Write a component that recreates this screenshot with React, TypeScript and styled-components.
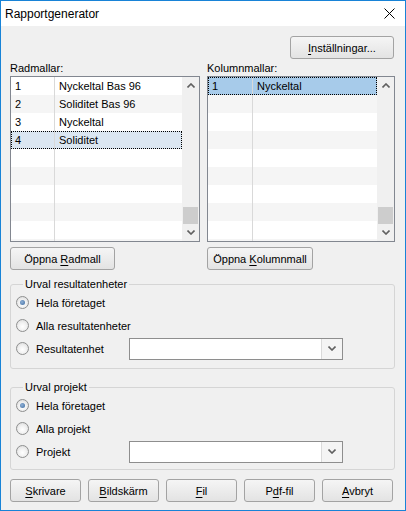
import React from "react";
import styled, { createGlobalStyle, css } from "styled-components";

const GlobalStyle = createGlobalStyle`
  html, body {
    margin: 0;
    padding: 0;
    background: #ffffff;
  }
  body {
    font-family: "Liberation Sans", Arial, sans-serif;
    font-size: 11px;
    color: #000;
  }
`;

const Window = styled.div`
  width: 406px;
  height: 511px;
  box-sizing: border-box;
  border: 1px solid #1883d7;
  background: #f0f0f0;
  display: flex;
  flex-direction: column;
`;

const TitleBar = styled.div`
  height: 25px;
  flex: none;
  background: #ffffff;
  display: flex;
  align-items: center;
  justify-content: space-between;
  padding: 0 10px 0 4px;
`;

const Title = styled.span`
  font-size: 12px;
  color: #000;
`;

const Body = styled.div`
  flex: 1;
  padding: 10px 10px 0 9px;
  display: flex;
  flex-direction: column;
`;

const TopRow = styled.div`
  display: flex;
  justify-content: flex-end;
  padding-right: 1px;
`;

const Button = styled.button<{ $width?: number }>`
  height: 23px;
  width: ${({ $width }) => ($width ? `${$width}px` : "auto")};
  box-sizing: border-box;
  border: 1px solid #a3a3a3;
  border-radius: 3px;
  background: linear-gradient(#f5f5f5, #e3e3e3);
  font-family: "Liberation Sans", Arial, sans-serif;
  font-size: 11px;
  color: #000;
  padding: 0;
  cursor: default;

  u {
    text-decoration: underline;
    text-underline-offset: 2px;
  }
`;

const Columns = styled.div`
  display: grid;
  grid-template-columns: 190px 188px;
  column-gap: 7px;
`;

const Column = styled.div`
  display: flex;
  flex-direction: column;
  align-items: flex-start;
`;

const FieldLabel = styled.div`
  line-height: 13px;
  padding-top: 3px;
  margin-bottom: 1px;
`;

const ListBox = styled.div`
  width: 100%;
  height: 166px;
  box-sizing: border-box;
  border: 1px solid #828790;
  background: #ffffff;
  display: flex;
  margin-bottom: 5px;
`;

const Rows = styled.div`
  flex: 1;
  overflow: hidden;
`;

const Row = styled.div<{ $col: number; $alt: boolean; $sel?: "focus" | "soft" }>`
  display: grid;
  grid-template-columns: ${({ $col }) => $col}px 1fr;
  height: 18px;
  line-height: 18px;
  background: ${({ $alt }) => ($alt ? "#f5f5f5" : "#ffffff")};
  ${({ $sel }) =>
    $sel &&
    css`
      background: ${$sel === "focus" ? "#a7cbea" : "#dbe6f1"};
      outline: 1px dotted #000;
      outline-offset: -1px;
    `}
`;

const Cell = styled.div<{ $divider?: boolean }>`
  padding-left: ${({ $divider }) => ($divider ? "4px" : "4px")};
  border-left: ${({ $divider }) => ($divider ? "1px solid #d9d9d9" : "none")};
  white-space: nowrap;
  overflow: hidden;
`;

const ScrollBar = styled.div`
  width: 17px;
  flex: none;
  background: #f0f0f0;
  display: flex;
  flex-direction: column;
`;

const ScrollArrow = styled.div`
  height: 17px;
  display: flex;
  align-items: center;
  justify-content: center;
`;

const Track = styled.div`
  flex: 1;
  display: flex;
  flex-direction: column;
  justify-content: flex-end;
  padding: 0 1px;
`;

const Thumb = styled.div`
  height: 17px;
  background: #cdcdcd;
`;

const Group = styled.fieldset<{ $top: number; $bottom: number }>`
  margin: ${({ $top }) => $top}px 0 0 0;
  padding: 0 0 ${({ $bottom }) => $bottom}px 5px;
  border: 1px solid #d5d5d5;
  border-radius: 3px;
  min-width: 0;
`;

const Legend = styled.legend`
  margin-left: 7px;
  padding: 0 2px;
  line-height: 13px;
`;

const RadioRow = styled.div`
  height: 23px;
  display: flex;
  align-items: center;
`;

const Radio = styled.span<{ $checked?: boolean }>`
  width: 13px;
  height: 13px;
  box-sizing: border-box;
  border-radius: 50%;
  border: 1px solid #8e8f8f;
  background: radial-gradient(circle at 50% 60%, #ffffff 0%, #f1f1f1 45%, #d6d6d6 100%);
  flex: none;
  margin-right: 7px;
  display: flex;
  align-items: center;
  justify-content: center;

  &::after {
    content: "";
    display: ${({ $checked }) => ($checked ? "block" : "none")};
    width: 5px;
    height: 5px;
    border-radius: 50%;
    background: radial-gradient(circle at 40% 40%, #8fb0d6, #3d6b9f);
  }
`;

const RadioLabel = styled.span<{ $width?: number }>`
  width: ${({ $width }) => ($width ? `${$width}px` : "auto")};
  flex: none;
`;

const Combo = styled.div`
  width: 214px;
  height: 22px;
  box-sizing: border-box;
  border: 1px solid #8e8e8e;
  background: #ffffff;
  display: flex;
  justify-content: flex-end;
`;

const ComboButton = styled.div`
  width: 20px;
  border-left: 1px solid #dadada;
  background: #f4f4f4;
  display: flex;
  align-items: center;
  justify-content: center;
`;

const Footer = styled.div`
  margin-top: 9px;
  display: grid;
  grid-template-columns: repeat(5, 71px);
  column-gap: 7px;
`;

const CloseIcon = () => (
  <svg width="11" height="11" viewBox="0 0 11 11">
    <path d="M0.5 0.5 L10.5 10.5 M10.5 0.5 L0.5 10.5" stroke="#000" strokeWidth="1" />
  </svg>
);

const Chevron = ({ up }: { up?: boolean }) => (
  <svg width="8" height="5" viewBox="0 0 8 5">
    <path
      d={up ? "M0.5 4.5 L4 1 L7.5 4.5" : "M0.5 0.5 L4 4 L7.5 0.5"}
      stroke="#606060"
      strokeWidth="1.6"
      fill="none"
    />
  </svg>
);

type Item = [string, string];

const TemplateList = ({
  items,
  col,
  selected,
  mode,
}: {
  items: Item[];
  col: number;
  selected: number;
  mode: "focus" | "soft";
}) => {
  const rows: Item[] = [...items];
  while (rows.length < 10) rows.push(["", ""]);
  return (
    <ListBox>
      <Rows>
        {rows.map(([n, name], i) => (
          <Row key={i} $col={col} $alt={i % 2 === 1} $sel={i === selected ? mode : undefined}>
            <Cell>{n}</Cell>
            <Cell $divider>{name}</Cell>
          </Row>
        ))}
      </Rows>
      <ScrollBar>
        <ScrollArrow>
          <Chevron up />
        </ScrollArrow>
        <Track>
          <Thumb />
        </Track>
        <ScrollArrow>
          <Chevron />
        </ScrollArrow>
      </ScrollBar>
    </ListBox>
  );
};

const RadioGroup = ({
  legend,
  options,
  top,
  bottom,
}: {
  legend: string;
  options: [string, string, string];
  top: number;
  bottom: number;
}) => (
  <Group $top={top} $bottom={bottom}>
    <Legend>{legend}</Legend>
    <RadioRow>
      <Radio $checked />
      <RadioLabel>{options[0]}</RadioLabel>
    </RadioRow>
    <RadioRow>
      <Radio />
      <RadioLabel>{options[1]}</RadioLabel>
    </RadioRow>
    <RadioRow>
      <Radio />
      <RadioLabel $width={93}>{options[2]}</RadioLabel>
      <Combo>
        <ComboButton>
          <Chevron />
        </ComboButton>
      </Combo>
    </RadioRow>
  </Group>
);

export default function App() {
  return (
    <>
      <GlobalStyle />
      <Window>
        <TitleBar>
          <Title>Rapportgenerator</Title>
          <CloseIcon />
        </TitleBar>
        <Body>
          <TopRow>
            <Button $width={104}>
              <u>I</u>nställningar...
            </Button>
          </TopRow>
          <Columns>
            <Column>
              <FieldLabel>Radmallar:</FieldLabel>
              <TemplateList
                col={43}
                selected={3}
                mode="soft"
                items={[
                  ["1", "Nyckeltal Bas 96"],
                  ["2", "Soliditet Bas 96"],
                  ["3", "Nyckeltal"],
                  ["4", "Soliditet"],
                ]}
              />
              <Button $width={105}>
                Öppna <u>R</u>admall
              </Button>
            </Column>
            <Column>
              <FieldLabel>Kolumnmallar:</FieldLabel>
              <TemplateList col={44} selected={0} mode="focus" items={[["1", "Nyckeltal"]]} />
              <Button $width={106}>
                Öppna <u>K</u>olumnmall
              </Button>
            </Column>
          </Columns>
          <RadioGroup
            legend="Urval resultatenheter"
            options={["Hela företaget", "Alla resultatenheter", "Resultatenhet"]}
            top={8}
            bottom={8}
          />
          <RadioGroup
            legend="Urval projekt"
            options={["Hela företaget", "Alla projekt", "Projekt"]}
            top={12}
            bottom={6}
          />
          <Footer>
            <Button>
              <u>S</u>krivare
            </Button>
            <Button>
              <u>B</u>ildskärm
            </Button>
            <Button>
              <u>F</u>il
            </Button>
            <Button>
              P<u>d</u>f-fil
            </Button>
            <Button>
              <u>A</u>vbryt
            </Button>
          </Footer>
        </Body>
      </Window>
    </>
  );
}
